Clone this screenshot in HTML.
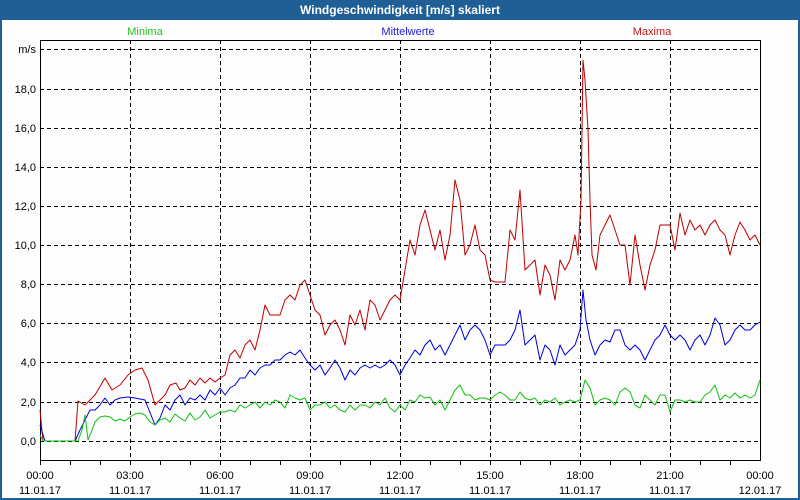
<!DOCTYPE html>
<html><head><meta charset="utf-8"><style>
html,body{margin:0;padding:0;width:800px;height:500px;overflow:hidden;background:#fcfdfc}
</style></head><body>
<svg width="800" height="500" xmlns="http://www.w3.org/2000/svg" font-family="Liberation Sans, sans-serif" font-size="11">
<rect x="0" y="0" width="800" height="500" fill="#1f5f96"/>
<rect x="2" y="20" width="796" height="478" fill="#fcfdfc"/>
<text x="400" y="14" fill="#fff" font-weight="bold" font-size="12" text-anchor="middle">Windgeschwindigkeit [m/s] skaliert</text>
<text x="145" y="35" fill="#22c022" text-anchor="middle">Minima</text>
<text x="408" y="35" fill="#2020e0" text-anchor="middle">Mittelwerte</text>
<text x="652" y="35" fill="#c01818" text-anchor="middle">Maxima</text>
<g stroke="#000" stroke-dasharray="4,3" stroke-width="1">
<line x1="40" y1="49.5" x2="760" y2="49.5"/>
<line x1="40" y1="89.5" x2="760" y2="89.5"/>
<line x1="40" y1="128.5" x2="760" y2="128.5"/>
<line x1="40" y1="167.5" x2="760" y2="167.5"/>
<line x1="40" y1="206.5" x2="760" y2="206.5"/>
<line x1="40" y1="245.5" x2="760" y2="245.5"/>
<line x1="40" y1="284.5" x2="760" y2="284.5"/>
<line x1="40" y1="323.5" x2="760" y2="323.5"/>
<line x1="40" y1="362.5" x2="760" y2="362.5"/>
<line x1="40" y1="402.5" x2="760" y2="402.5"/>
<line x1="40" y1="441.5" x2="760" y2="441.5"/>
<line x1="130.5" y1="40" x2="130.5" y2="460"/>
<line x1="220.5" y1="40" x2="220.5" y2="460"/>
<line x1="310.5" y1="40" x2="310.5" y2="460"/>
<line x1="400.5" y1="40" x2="400.5" y2="460"/>
<line x1="490.5" y1="40" x2="490.5" y2="460"/>
<line x1="580.5" y1="40" x2="580.5" y2="460"/>
<line x1="670.5" y1="40" x2="670.5" y2="460"/>
</g>
<rect x="40.5" y="40.5" width="720" height="420" fill="none" stroke="#000"/>
<g stroke="#000">
<line x1="70.5" y1="460" x2="70.5" y2="465"/><line x1="100.5" y1="460" x2="100.5" y2="465"/><line x1="130.5" y1="460" x2="130.5" y2="465"/>
<line x1="160.5" y1="460" x2="160.5" y2="465"/><line x1="190.5" y1="460" x2="190.5" y2="465"/><line x1="220.5" y1="460" x2="220.5" y2="465"/>
<line x1="250.5" y1="460" x2="250.5" y2="465"/><line x1="280.5" y1="460" x2="280.5" y2="465"/><line x1="310.5" y1="460" x2="310.5" y2="465"/>
<line x1="340.5" y1="460" x2="340.5" y2="465"/><line x1="370.5" y1="460" x2="370.5" y2="465"/><line x1="400.5" y1="460" x2="400.5" y2="465"/>
<line x1="430.5" y1="460" x2="430.5" y2="465"/><line x1="460.5" y1="460" x2="460.5" y2="465"/><line x1="490.5" y1="460" x2="490.5" y2="465"/>
<line x1="520.5" y1="460" x2="520.5" y2="465"/><line x1="550.5" y1="460" x2="550.5" y2="465"/><line x1="580.5" y1="460" x2="580.5" y2="465"/>
<line x1="610.5" y1="460" x2="610.5" y2="465"/><line x1="640.5" y1="460" x2="640.5" y2="465"/><line x1="670.5" y1="460" x2="670.5" y2="465"/>
<line x1="700.5" y1="460" x2="700.5" y2="465"/><line x1="730.5" y1="460" x2="730.5" y2="465"/><line x1="40.5" y1="460" x2="40.5" y2="465"/>
</g>
<g fill="#000" text-anchor="end">
<text x="36" y="53">m/s</text>
<text x="36" y="93">18,0</text><text x="36" y="132">16,0</text><text x="36" y="171">14,0</text>
<text x="36" y="210">12,0</text><text x="36" y="249">10,0</text><text x="36" y="288">8,0</text>
<text x="36" y="327">6,0</text><text x="36" y="366">4,0</text><text x="36" y="406">2,0</text><text x="36" y="445">0,0</text>
</g>
<g fill="#000" text-anchor="middle">
<text x="40" y="479">00:00</text><text x="40" y="494">11.01.17</text>
<text x="130" y="479">03:00</text><text x="130" y="494">11.01.17</text>
<text x="220" y="479">06:00</text><text x="220" y="494">11.01.17</text>
<text x="310" y="479">09:00</text><text x="310" y="494">11.01.17</text>
<text x="400" y="479">12:00</text><text x="400" y="494">11.01.17</text>
<text x="490" y="479">15:00</text><text x="490" y="494">11.01.17</text>
<text x="580" y="479">18:00</text><text x="580" y="494">11.01.17</text>
<text x="670" y="479">21:00</text><text x="670" y="494">11.01.17</text>
<text x="760" y="479">00:00</text><text x="760" y="494">12.01.17</text>
</g>
<g fill="none" stroke-width="1" stroke-linejoin="round">
<polyline stroke="#c00000" points="40,410 43,441 75,441 78,401 85,405 95,395 105,378 112,390 120,385 128,375 135,370 142,368 148,380 155,405 160,400 165,395 170,385 176,383 180,390 185,388 190,380 195,385 200,378 205,383 210,378 215,382 220,378 225,375 230,355 235,350 240,358 245,345 250,340 255,350 260,330 265,305 270,315 275,315 280,315 285,300 290,295 295,300 300,285 305,280 310,295 315,310 320,315 325,335 330,325 335,320 340,330 345,345 350,315 355,325 360,310 365,330 370,300 375,305 380,320 385,310 390,300 395,295 400,300 405,270 410,240 415,255 420,225 425,210 430,230 435,250 440,230 445,260 450,235 455,180 460,200 465,255 470,245 475,225 480,250 485,255 490,280 495,282 500,282 505,282 510,230 515,240 520,190 525,270 530,265 535,260 540,295 545,265 550,275 555,300 560,260 565,270 570,260 575,235 578,255 581,200 583,60 585,80 588,130 590,200 592,255 596,270 600,235 605,225 610,215 615,230 620,245 625,245 630,285 635,235 640,265 645,290 650,265 655,250 660,225 665,225 670,225 675,250 680,213 685,235 690,220 695,230 700,225 705,235 710,225 715,220 720,230 725,235 730,255 735,235 740,222 745,230 750,240 755,235 760,245"/>
<polyline stroke="#0000e0" points="40,425 45,441 75,441 80,430 85,420 90,410 95,410 100,405 105,398 110,405 115,400 120,398 128,397 135,398 145,400 155,425 160,418 165,405 170,410 175,400 180,395 185,405 190,398 195,400 200,395 205,400 210,390 215,395 220,388 225,395 230,388 235,385 240,378 245,378 250,370 255,375 260,368 265,365 270,365 275,360 280,360 285,355 290,352 295,355 300,350 305,358 310,365 315,370 320,365 325,375 330,368 335,360 340,368 345,380 350,370 355,375 360,368 365,365 370,368 375,365 380,368 385,365 390,360 395,365 400,375 405,365 410,358 415,350 420,355 425,345 430,340 435,350 440,345 445,355 450,345 455,335 460,325 465,340 470,330 475,325 480,330 485,340 490,355 495,345 500,345 505,345 510,340 515,330 520,310 525,345 530,340 535,335 540,360 545,345 550,350 555,365 560,345 565,355 570,350 575,345 580,330 583,290 586,320 590,340 595,355 600,345 605,340 610,342 615,330 620,330 625,345 630,350 635,345 640,350 645,360 650,350 655,340 660,335 665,325 670,335 675,340 680,335 685,340 690,350 695,340 700,335 705,345 710,335 715,318 720,325 725,345 730,340 735,330 740,325 745,330 750,330 755,325 760,322"/>
<polyline stroke="#10c010" points="40,435 43,441 78,441 82,430 85,415 88,440 92,430 95,422 100,417 105,416 110,417 115,421 120,419 125,421 130,417 135,414 140,413 145,415 150,422 155,425 160,420 165,418 170,422 175,414 180,418 185,421 190,413 195,420 200,417 205,410 210,418 215,415 220,412 225,412 230,410 235,412 240,405 245,408 250,405 255,402 260,408 265,402 270,405 275,400 280,402 285,408 290,395 295,398 300,400 305,398 310,410 315,405 320,405 325,402 330,408 335,405 340,410 345,412 350,405 355,410 360,405 365,405 370,408 375,402 380,405 385,398 390,408 395,412 400,405 405,410 410,400 415,402 420,395 425,398 430,397 435,405 440,400 445,410 450,400 455,390 460,385 465,395 470,395 475,400 480,398 485,398 490,400 495,395 500,392 505,395 510,400 515,400 520,392 525,398 530,400 535,398 540,405 545,400 550,402 555,398 560,405 565,402 570,400 575,402 580,400 585,380 590,388 595,405 600,400 605,398 610,400 615,405 620,392 625,388 630,392 635,405 640,408 645,395 650,400 655,405 660,395 665,395 670,412 675,400 680,400 685,402 690,400 695,402 700,402 705,395 710,392 715,385 720,400 725,395 730,398 735,393 740,398 745,395 750,398 755,395 760,380"/>
</g>
</svg>
</body></html>
